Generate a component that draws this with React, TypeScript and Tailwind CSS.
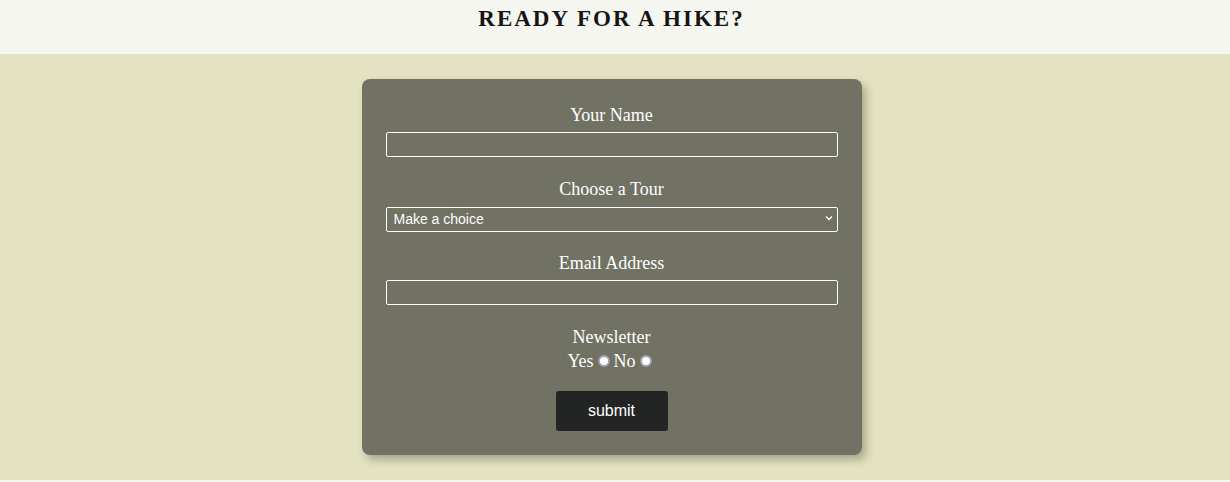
import React from 'react';

const serif = { fontFamily: '"Liberation Serif", "DejaVu Serif", serif' };

function Field({ label, children }: { label: string; children: React.ReactNode }) {
  return (
    <div className="flex flex-col items-center mb-[19.5px]">
      <label className="text-[18px] leading-[24px] text-white mb-[5px]" style={serif}>
        {label}
      </label>
      {children}
    </div>
  );
}

function Radio() {
  return <span className="inline-block w-[12px] h-[12px] rounded-full bg-white border-2 border-[#a29fb0] mx-[4px]" />;
}

export default function App() {
  return (
    <div className="w-[1230px] h-[482px] bg-[#f5f6f0] overflow-hidden pr-[7px]">
      <header className="h-[54px] flex justify-center pt-[5px]">
        <h1
          className="text-[23px] leading-[28px] font-bold tracking-[2px] uppercase text-[#151515]"
          style={serif}
        >
          Ready for a Hike?
        </h1>
      </header>
      <section className="h-[426px] bg-[#e3e3c4] flex justify-center pt-[25px] -mr-[7px] pr-[7px]">
        <form className="w-[500px] h-[376px] bg-[#717263] rounded-[8px] px-[24px] pt-[24px] shadow-[4px_5px_8px_rgba(60,60,30,0.35)]">
          <Field label="Your Name">
            <input className="w-full h-[25px] border border-white rounded-[2px] bg-transparent outline-none" />
          </Field>
          <Field label="Choose a Tour">
            <div className="relative w-full">
              <select
                className="w-full h-[25px] border border-white rounded-[2px] bg-transparent text-white text-[14px] pl-[7px] appearance-none outline-none"
                style={{ fontFamily: '"Liberation Sans", Arial, sans-serif' }}
              >
                <option>Make a choice</option>
              </select>
              <svg
                className="absolute right-[5px] top-[9px]"
                width="8"
                height="6"
                viewBox="0 0 8 6"
                fill="none"
              >
                <path d="M1 1.5 L4 4.5 L7 1.5" stroke="white" strokeWidth="1.3" />
              </svg>
            </div>
          </Field>
          <Field label="Email Address">
            <input className="w-full h-[25px] border border-white rounded-[2px] bg-transparent outline-none" />
          </Field>
          <div className="flex flex-col items-center">
            <div className="text-[18px] leading-[24px] text-white" style={serif}>
              Newsletter
            </div>
            <div className="flex items-center text-[18px] leading-[24px] text-white" style={serif}>
              Yes
              <Radio />
              No
              <Radio />
            </div>
            <button
              type="button"
              className="mt-[18px] w-[112px] h-[40px] bg-[#222524] rounded-[3px] text-white text-[16px]"
              style={{ fontFamily: '"Liberation Sans", Arial, sans-serif' }}
            >
              submit
            </button>
          </div>
        </form>
      </section>
    </div>
  );
}
